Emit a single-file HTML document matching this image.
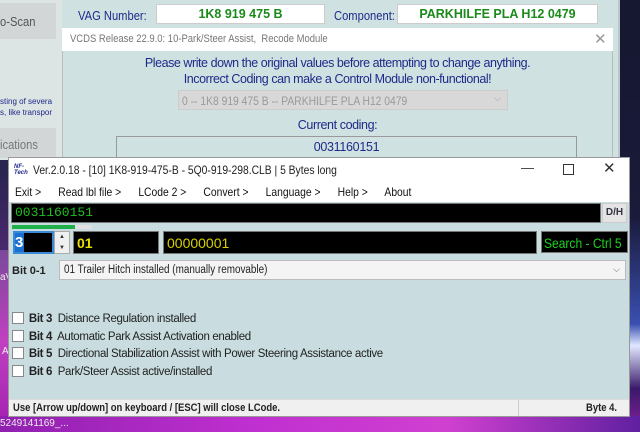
<!DOCTYPE html>
<html><head><meta charset="utf-8"><style>
*{margin:0;padding:0;box-sizing:border-box}
body{width:640px;height:432px;overflow:hidden;position:relative;font-family:"Liberation Sans",Arial,sans-serif;background:linear-gradient(180deg,#1c1f3a 0%,#2a2550 40%,#6a2a8a 75%,#b020c0 100%)}
.a{position:absolute}
.nav{color:#1d2a8a}
.n{display:inline-block;transform:scaleX(.86);transform-origin:0 0;white-space:nowrap}
</style></head><body>
<div class="a" style="left:620px;top:0;width:20px;height:432px;background:linear-gradient(180deg,#151830,#1a1a3a 50%,#3a4fb0 75%,#e0e8ff 80%,#3a1a6a 90%,#8a20a0)"></div>
<div class="a" style="left:0;top:250px;width:10px;height:182px;background:linear-gradient(180deg,#7a4a9a,#c040c0 50%,#a020b0)"></div>
<div class="a" style="left:0;top:416px;width:640px;height:16px;background:linear-gradient(90deg,#9020b0,#c030d0 40%,#d040d0 70%,#6020a0)"></div>
<div class="a" style="left:0;top:418px;font-size:10px;color:#eee">5249141169_...</div>
<div class="a" style="left:0;top:272px;font-size:10px;color:#eee">aV</div>
<div class="a" style="left:2px;top:346px;font-size:10px;color:#eee">A</div>
<div class="a" style="left:0;top:0;width:620px;height:160px;background:#cfe1e1;border-right:2px solid #b8c8c8"></div>
<div class="a" style="left:0;top:0;width:62px;height:160px;background:#dde4e4"></div>
<div class="a" style="left:0;top:3px;width:56px;height:36px;background:#d3d6d6;font-size:13px;color:#555;padding:11px 0 0 0"><span class="n">o-Scan</span></div>
<div class="a" style="left:0;top:128px;width:56px;height:30px;background:#d3d6d6;font-size:13px;color:#777;padding:9px 0 0 0"><span class="n">ications</span></div>
<div class="a nav" style="left:0;top:96px;font-size:8px;line-height:11px;color:#1d2a8a">sting of severa<br>s, like transpor</div>
<div class="a nav" style="left:78px;top:8px;font-size:13px"><span class="n">VAG Number:</span></div>
<div class="a" style="left:156px;top:4px;width:169px;height:20px;background:#fff;border:1px solid #ccc;color:#1a8a1a;font-weight:bold;font-size:12.5px;text-align:center;line-height:18px">1K8 919 475 B</div>
<div class="a nav" style="left:334px;top:8px;font-size:13px"><span class="n">Component:</span></div>
<div class="a" style="left:397px;top:4px;width:201px;height:20px;background:#fff;border:1px solid #ccc;color:#1a8a1a;font-weight:bold;font-size:12.5px;text-align:center;line-height:18px">PARKHILFE PLA H12 0479</div>
<div class="a" style="left:62px;top:28px;width:551px;height:132px;background:#cfe1e1;border:1px solid #bbb"></div>
<div class="a" style="left:62px;top:28px;width:551px;height:23px;background:#fff;font-size:11px;color:#777;padding:5px 0 0 8px"><span class="n">VCDS Release 22.9.0: 10-Park/Steer Assist,&nbsp; Recode Module</span><span class="a" style="left:532px;top:2px;font-size:15px;color:#999">✕</span></div>
<div class="a nav" style="left:62px;top:55px;width:551px;text-align:center;font-size:12.5px;line-height:16px;letter-spacing:-0.45px">Please write down the original values before attempting to change anything.<br>Incorrect Coding can make a Control Module non-functional!</div>
<div class="a" style="left:178px;top:90px;width:330px;height:20px;background:#d8d8d8;border:1px solid #ccc;font-size:12px;color:#999;padding:3px 0 0 3px"><span class="n">0 -- 1K8 919 475 B -- PARKHILFE PLA H12 0479</span><span class="a" style="right:6px;top:2px;font-size:9px">⌵</span></div>
<div class="a nav" style="left:62px;top:118px;width:551px;text-align:center;font-size:12.5px;letter-spacing:-0.4px">Current coding:</div>
<div class="a nav" style="left:116px;top:136px;width:461px;height:24px;border:1px solid #999;text-align:center;font-size:12.5px;padding-top:3px;letter-spacing:-0.3px">0031160151</div>
<div class="a" style="left:8px;top:157px;width:622px;height:260px;background:#c9dde0;border:1px solid #999"></div>
<div class="a" style="left:9px;top:158px;width:620px;height:44px;background:#fff"></div>
<div class="a" style="left:14px;top:164px;font-size:6px;font-style:italic;font-weight:bold;color:#1d2a8a;line-height:6px">NF-<br>Tech</div>
<div class="a" style="left:33px;top:163px;font-size:12px;color:#222"><span class="n">Ver.2.0.18 - [10] 1K8-919-475-B - 5Q0-919-298.CLB | 5 Bytes long</span></div>
<div class="a" style="left:521px;top:160px;font-size:13px;color:#333">—</div>
<div class="a" style="left:563px;top:164px;width:11px;height:11px;border:1px solid #333"></div>
<div class="a" style="left:603px;top:159px;font-size:15px;color:#333">✕</div>
<div class="a" style="left:15px;top:185px;font-size:12px;color:#111"><span class="n" style="white-space:pre">Exit &gt;      Read lbl file &gt;      LCode 2 &gt;      Convert &gt;      Language &gt;      Help &gt;      About</span></div>
<div class="a" style="left:11px;top:203px;width:590px;height:20px;background:#000;border:1px solid #777;color:#1fc01f;font-family:'Liberation Mono',monospace;font-size:13px;padding:1px 0 0 3px">0031160151</div>
<div class="a" style="left:602px;top:203px;width:25px;height:20px;background:#e4e4e4;border:1px solid #ccc;font-size:10px;font-weight:bold;color:#334;text-align:center;line-height:18px">D/H</div>
<div class="a" style="left:12px;top:225px;width:80px;height:4px;background:#e0e0e0"></div>
<div class="a" style="left:12px;top:225px;width:63px;height:4px;background:#1fb04a"></div>
<div class="a" style="left:13px;top:231px;width:41px;height:23px;background:#000;border:2px solid #3a8ad8"></div>
<div class="a" style="left:15px;top:233px;width:9px;height:19px;background:#1a70d0;color:#fff;font-size:15px;font-weight:bold;line-height:19px">3</div>
<div class="a" style="left:54px;top:231px;width:16px;height:23px;background:#f0f0f0;border:1px solid #aaa;font-size:6px;text-align:center;line-height:11px;color:#333">▲<br>▼</div>
<div class="a" style="left:73px;top:231px;width:86px;height:23px;background:#000;border:1px solid #777;color:#e8e000;font-weight:bold;font-size:14px;padding:3px 0 0 3px">01</div>
<div class="a" style="left:163px;top:231px;width:374px;height:23px;background:#000;border:1px solid #777;color:#d8d000;font-size:14px;padding:3px 0 0 3px">00000001</div>
<div class="a" style="left:541px;top:231px;width:87px;height:22px;background:#000;border:1px solid #777;color:#1fd01f;font-size:14px;padding:3px 0 0 2px;white-space:nowrap;overflow:hidden"><span class="n">Search - Ctrl 5</span></div>
<div class="a" style="left:12px;top:265px;font-size:11px;font-weight:bold;color:#222">Bit 0-1</div>
<div class="a" style="left:59px;top:260px;width:567px;height:20px;background:#f4f4f4;border:1px solid #bbb;font-size:11.5px;color:#222;padding:3px 0 0 4px"><span class="n">01 Trailer Hitch installed (manually removable)</span><span class="a" style="right:5px;top:3px;font-size:9px;color:#666">⌵</span></div>
<div class="a" style="left:12px;top:311px;font-size:11.5px;color:#222;line-height:17.7px;letter-spacing:-0.35px">
<div><span style="display:inline-block;width:12px;height:12px;background:#fff;border:1px solid #888;vertical-align:-2px"></span> <b style="margin-left:2px">Bit 3</b>&nbsp; Distance Regulation installed</div>
<div><span style="display:inline-block;width:12px;height:12px;background:#fff;border:1px solid #888;vertical-align:-2px"></span> <b style="margin-left:2px">Bit 4</b>&nbsp; Automatic Park Assist Activation enabled</div>
<div><span style="display:inline-block;width:12px;height:12px;background:#fff;border:1px solid #888;vertical-align:-2px"></span> <b style="margin-left:2px">Bit 5</b>&nbsp; Directional Stabilization Assist with Power Steering Assistance active</div>
<div><span style="display:inline-block;width:12px;height:12px;background:#fff;border:1px solid #888;vertical-align:-2px"></span> <b style="margin-left:2px">Bit 6</b>&nbsp; Park/Steer Assist active/installed</div>
</div>
<div class="a" style="left:9px;top:399px;width:620px;height:17px;background:#f0f0f0;border-top:1px solid #ddd"></div>
<div class="a" style="left:518px;top:400px;width:1px;height:16px;background:#ccc"></div>
<div class="a" style="left:13px;top:402px;font-size:11px;font-weight:bold;color:#222"><span class="n">Use [Arrow up/down] on keyboard / [ESC] will close LCode.</span></div>
<div class="a" style="left:586px;top:402px;font-size:11px;font-weight:bold;color:#222"><span class="n">Byte 4.</span></div>
</body></html>
